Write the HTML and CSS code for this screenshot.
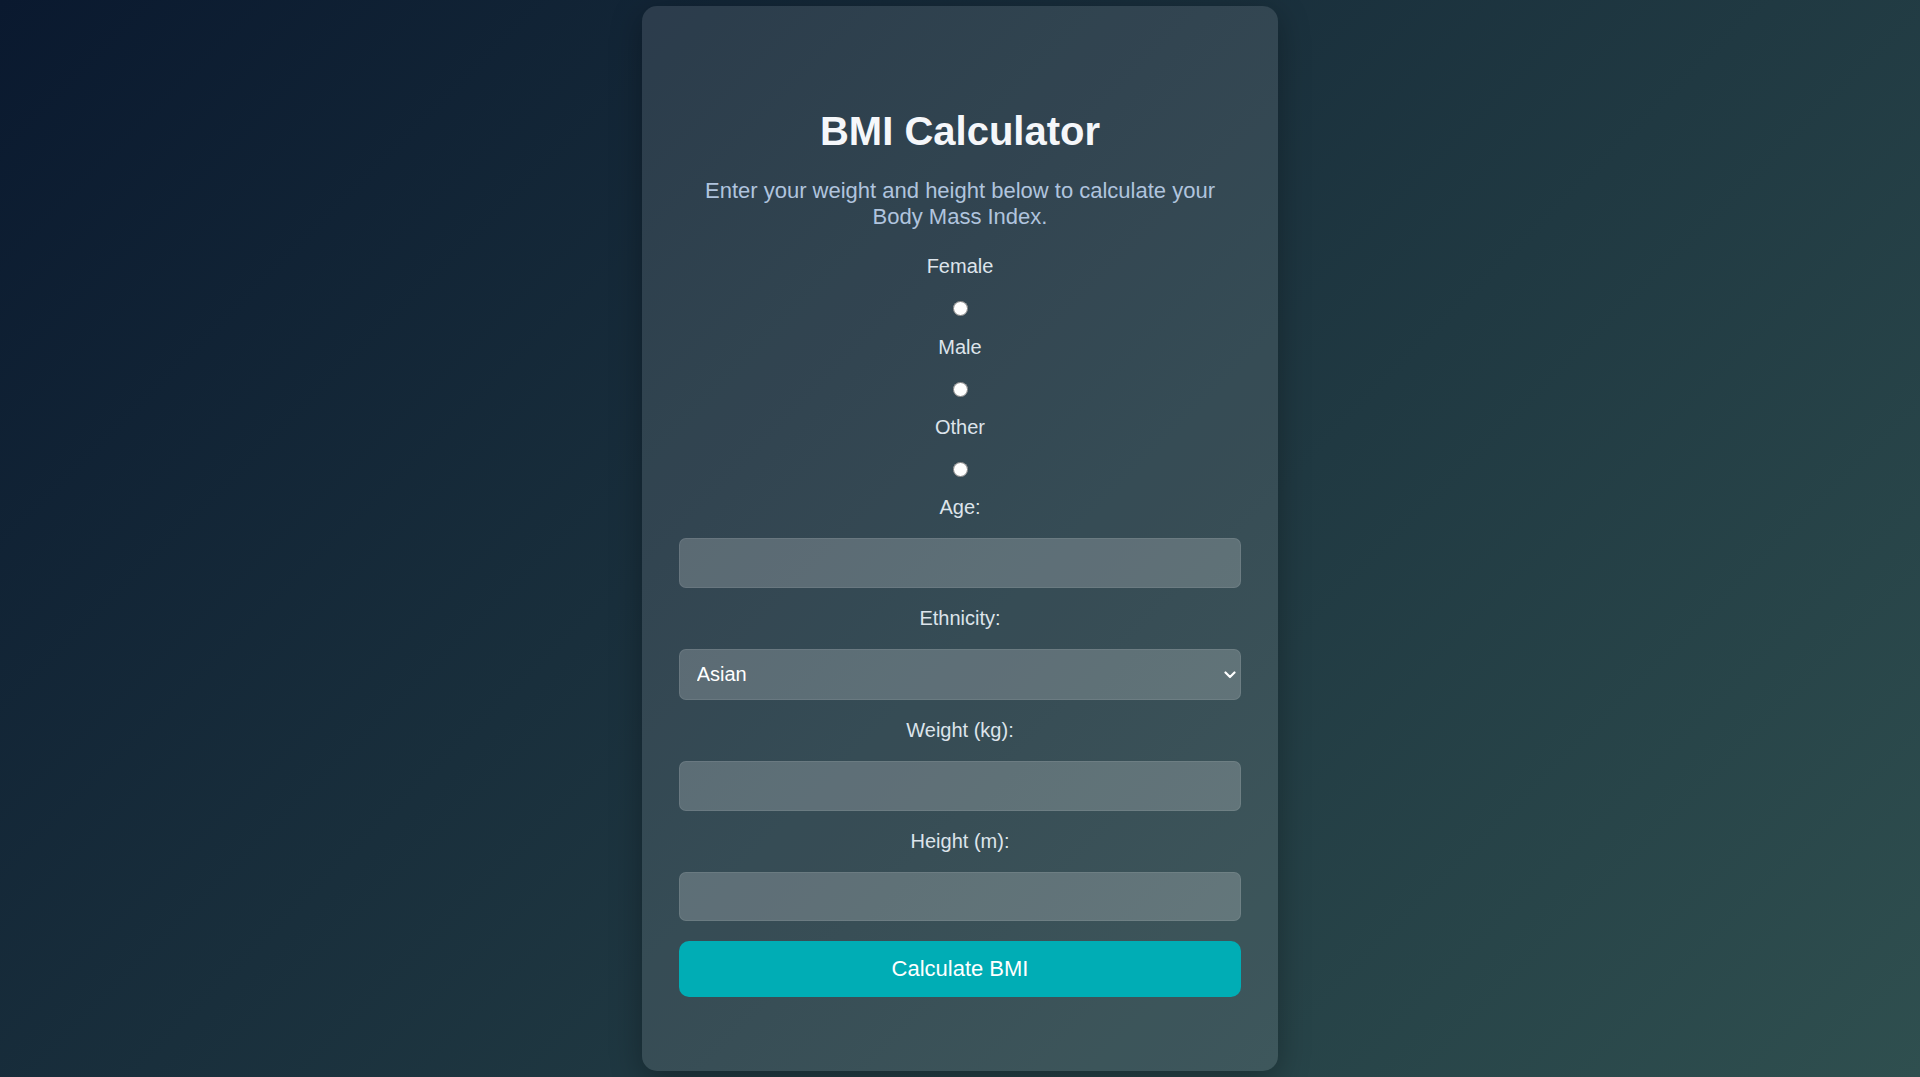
FILE: index.html
```html
<!DOCTYPE html>
<html lang="en">
<head>
<meta charset="utf-8">
<title>BMI Calculator</title>
<link rel="stylesheet" href="styles.css">
</head>
<body>
  <main class="card">
    <h1 class="title">BMI Calculator</h1>
    <p class="subtitle">Enter your weight and height below to calculate your Body Mass Index.</p>
    <form class="form">
      <label class="label" for="female">Female</label>
      <input class="radio" type="radio" id="female" name="gender" value="female">
      <label class="label" for="male">Male</label>
      <input class="radio" type="radio" id="male" name="gender" value="male">
      <label class="label" for="other">Other</label>
      <input class="radio" type="radio" id="other" name="gender" value="other">
      <label class="label" for="age">Age:</label>
      <input class="field" type="number" id="age">
      <label class="label" for="ethnicity">Ethnicity:</label>
      <div class="select-wrap">
        <select class="field select" id="ethnicity">
          <option>Asian</option>
          <option>Black</option>
          <option>Hispanic</option>
          <option>White</option>
          <option>Other</option>
        </select>
        <svg class="chevron" width="12" height="8" viewBox="0 0 12 8" aria-hidden="true">
          <path d="M1.5 1.5 L6 6 L10.5 1.5" fill="none" stroke="#ffffff" stroke-width="2.2" stroke-linecap="round" stroke-linejoin="round"/>
        </svg>
      </div>
      <label class="label" for="weight">Weight (kg):</label>
      <input class="field" type="number" id="weight">
      <label class="label" for="height">Height (m):</label>
      <input class="field" type="number" id="height">
      <button class="button" type="button">Calculate BMI</button>
    </form>
  </main>
</body>
</html>
```

FILE: styles.css
```css
* {
  box-sizing: border-box;
}

html, body {
  margin: 0;
  padding: 0;
}

body {
  min-height: 100vh;
  background: linear-gradient(135deg, #0a192f 0%, #2f4f4f 100%);
  font-family: "Liberation Sans", Arial, sans-serif;
  display: flex;
  align-items: center;
  justify-content: center;
}

.card {
  width: 636px;
  padding: 103.2px 37px 74.8px;
  background: rgba(255, 255, 255, 0.11);
  border-radius: 15px;
  box-shadow: 0 8px 32px rgba(0, 0, 0, 0.3);
  text-align: center;
}

.title {
  margin: 0 0 24.5px;
  font-size: 40px;
  font-weight: 700;
  line-height: normal;
  color: #f5f7fa;
}

.subtitle {
  margin: 0 0 25px;
  font-size: 22px;
  line-height: normal;
  color: #b0c4de;
}

.form {
  display: flex;
  flex-direction: column;
  align-items: center;
  gap: 19.25px;
}

.label {
  font-size: 20px;
  line-height: normal;
  color: #dde4eb;
}

.radio {
  width: 15px;
  height: 15px;
  margin: 3.8px 0 0;
}

.field {
  width: 100%;
  height: 49.4px;
  padding: 0 15px;
  border: 1px solid rgba(255, 255, 255, 0.08);
  border-radius: 7px;
  background: rgba(255, 255, 255, 0.2);
  color: #ffffff;
  font-family: "Liberation Sans", Arial, sans-serif;
  font-size: 20px;
  outline: none;
}

.select-wrap {
  position: relative;
  width: 100%;
}

.select {
  display: block;
  height: 50.4px;
  padding: 0 30px 0 16.7px;
  appearance: none;
  -webkit-appearance: none;
}

.select option {
  color: #000;
}

.chevron {
  position: absolute;
  right: 5px;
  top: 21.5px;
  pointer-events: none;
}

.button {
  width: 100%;
  padding: 15px;
  border: none;
  border-radius: 10px;
  background: #00adb5;
  color: #ffffff;
  font-family: "Liberation Sans", Arial, sans-serif;
  font-size: 22px;
  line-height: normal;
  cursor: pointer;
}
```
